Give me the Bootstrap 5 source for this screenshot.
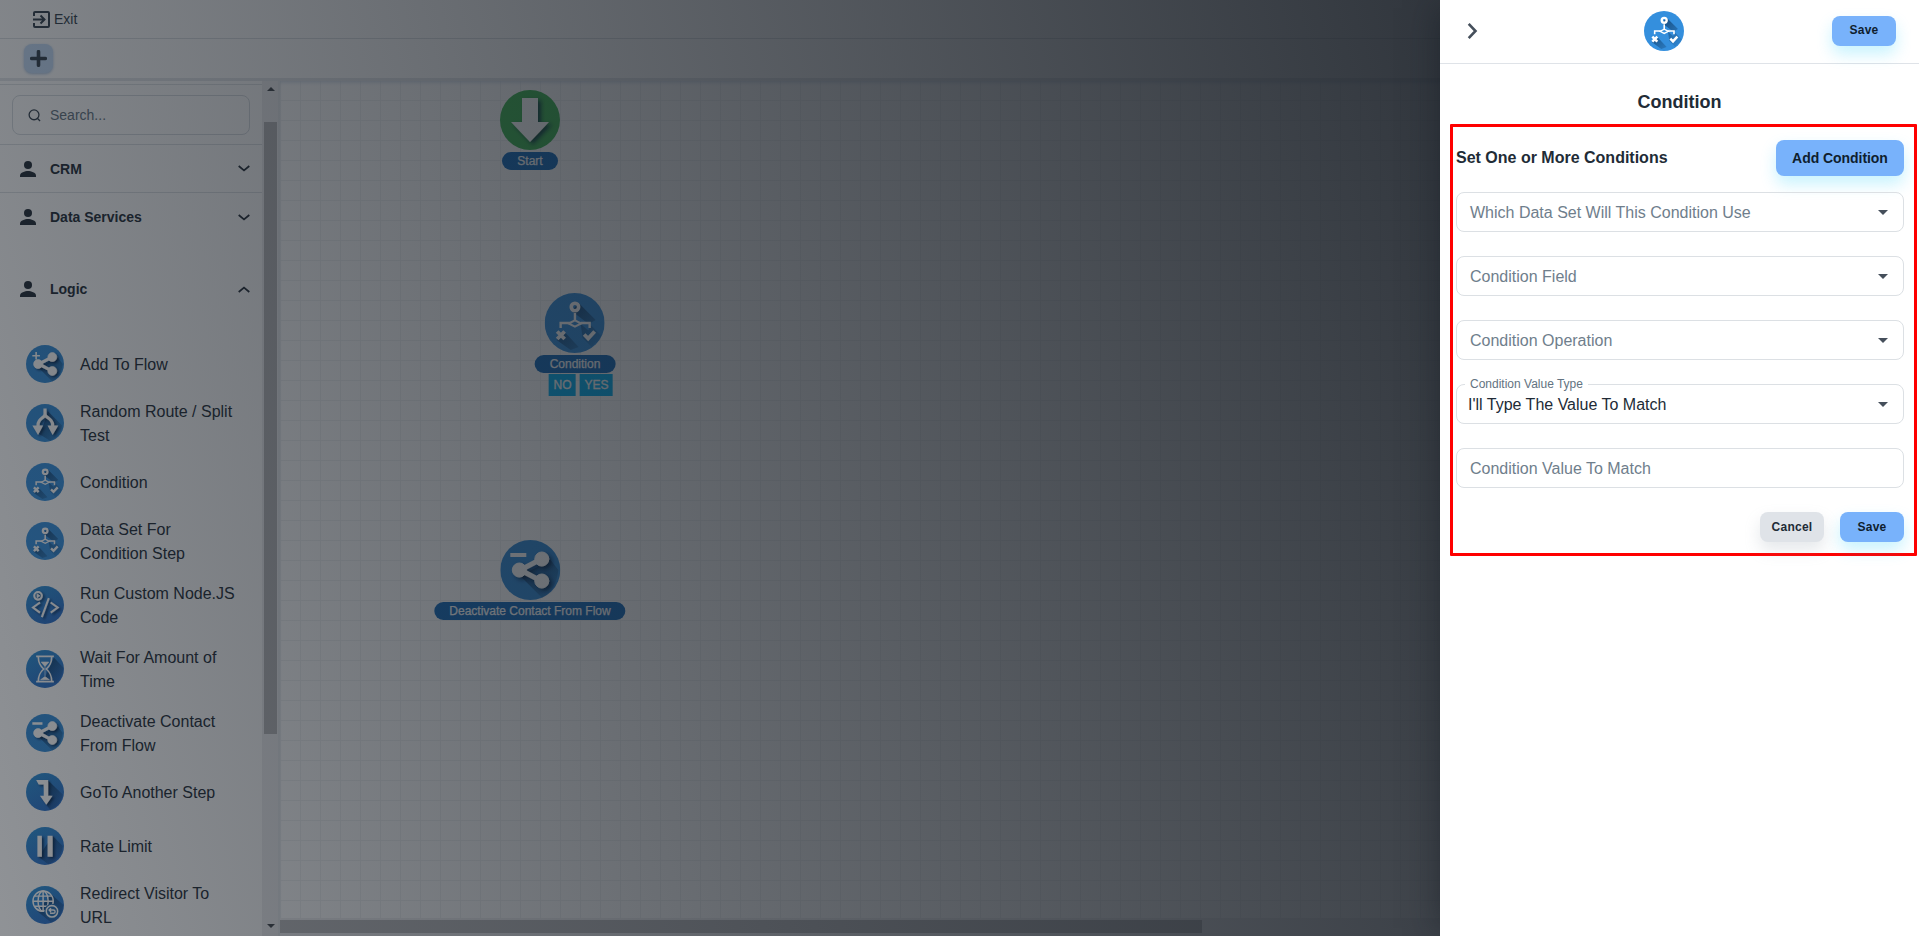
<!DOCTYPE html>
<html lang="en">
<head>
<meta charset="utf-8">
<title>Flow builder</title>
<link rel="stylesheet" href="https://cdn.jsdelivr.net/npm/bootstrap@5.3.0/dist/css/bootstrap.min.css">
<style>
body{font-family:"Liberation Sans",Arial,sans-serif;color:#212b36;font-size:16px;background:#fff;line-height:24px}
.app{height:100vh;position:relative}
.topbar{height:39px;border-bottom:1px solid #dce0e4;padding-left:32px;font-size:14px;color:#323f4c}
.topbar span{margin-left:-1px}
.toolbar{height:42px;border-bottom:3px solid #e4e7eb;padding-left:24px}
.addbtn{width:29px;height:29px;border-radius:8px;background:#c4dcf8;box-shadow:0 1px 3px #aac4e4}
.side{width:262px;padding-top:4px;margin-top:-1px}
.searchwrap{border-top:1px solid #dfe3e6;border-bottom:1px solid #dce0e4;height:61px;padding:10px 12px}
.searchbox{height:40px;border:1px solid #d6dbe0;border-radius:8px;font-size:14px;color:#637381;padding-left:15px;gap:9px}
.group{height:48px;padding:0 12px 0 16px;font-size:14px;font-weight:700}
.group .label{margin-left:10px}
.ruled{border-bottom:1px solid #dce0e4}
.item{min-height:54px;padding:8px 0 8px 26px;gap:16px}
.item svg{width:38px;height:38px;flex:none}
.item span{width:165px;position:relative;top:.5px}
.vbar{width:18px;background:#efeff1;border-right:2px solid #e6e9ec;padding:6px 1px 4px 2px}
.vthumb{height:612px;background:#b7b7b9;margin-top:31px}
.board{position:relative;background-color:#fff;background-image:linear-gradient(to right,#f1f3f4 1px,transparent 1px),linear-gradient(#f1f3f4 1px,transparent 1px);background-size:20px 20px;background-position:0 -1px;box-shadow:inset 0 3px 4px -2px #ccd7e6}
.node{position:absolute;transform:translateX(-50%)}
.node svg{width:60px;height:60px}
.pill{background:#156bbb;color:#fff;border-radius:9px;height:18px;line-height:18px;font-size:12px;padding:0 15px;margin-top:2px;-webkit-text-stroke:.25px #fff;white-space:nowrap}
.port{background:#02b0f2;color:#fff;font-size:12px;line-height:22px;height:22px;padding:0 4.500px;margin-top:1px;-webkit-text-stroke:.3px #fff}
.hbar{position:absolute;left:0;right:0;bottom:0;height:18px;background:#efeff1;padding-top:2px}
.hthumb{width:922px;height:13px;background:#bcbcbe}
.shade{position:absolute;inset:0;background:linear-gradient(75deg,rgba(22,28,36,.48) 0%,rgb(22,28,36) 100%)}
.panel{position:absolute;top:0;right:0;bottom:0;width:479px;background:#fff;box-shadow:-10px 0 30px -8px rgba(22,28,36,.5)}
.panelhead{height:64px;border-bottom:1px solid #dfe3e8;padding:0 23px 2px 20px;display:grid;grid-template-columns:1fr auto 1fr}
.act{background:#78b2fb;border:0;border-radius:8px;color:#0f1e2e;font-weight:700;font-size:12px;width:64px;height:30px;letter-spacing:.25px;padding:0 0 1px;box-shadow:0 8px 16px rgba(0,200,250,.22)}
.act.wide{width:128px;height:36px;font-size:14px;letter-spacing:-.05px;padding:0}
.act.muted{background:#dfe3e8;color:#212b36;box-shadow:0 8px 16px rgba(145,158,171,.24)}
.ttl{font-size:18px;font-weight:700;margin:26px 0 10px;text-align:center;line-height:24px}
.framed{border:3px solid #f00;margin:0 2px 0 10px;height:432px;padding:13px 10px 0 3px;border-radius:1px}
.field{height:40px;border:1px solid #dce0e4;border-radius:8px;padding:1px 14px 0 13px;margin-bottom:24px;color:#6f7e8c;position:relative}
.field .val{color:#212b36;margin-left:-2px}
.field .cap{position:absolute;top:-9px;left:8px;padding:0 5px;font-size:12px;line-height:16px;background:#fff;color:#637381}
</style>
</head>
<body class="overflow-hidden">
<svg width="0" height="0" class="position-absolute">
<defs>
<filter id="sh" x="-30%" y="-30%" width="180%" height="180%"><feDropShadow dx="3" dy="2.5" stdDeviation="2" flood-color="#001c3c" flood-opacity=".75"/></filter>
<linearGradient id="long" x1="0" y1="0" x2="1" y2="1"><stop offset="0" stop-color="#06284c" stop-opacity=".8"/><stop offset="1" stop-color="#06284c" stop-opacity="0"/></linearGradient>
<linearGradient id="bl" x1="0" y1="0" x2="0.6" y2="1"><stop offset="0" stop-color="#2b91d6"/><stop offset="1" stop-color="#2b6fc8"/></linearGradient>
<symbol id="cond" viewBox="0 0 60 60"><circle cx="30" cy="30" r="30" fill="#348fdd"/>
<path d="M34 10L51 27L44 31L27 18Z M36 31L54 46L47 54L38 45Z M20 39L34 54L26 57L12 47Z M46 32L57 43L52 50L42 42Z" fill="url(#long)"/>
<g fill="none" stroke="#fff"><circle cx="30.300" cy="14" r="3.700" stroke-width="3.600"/><path d="M30.300 20v7M16 35v-5h9M36 30h9v5" stroke-width="2.400"/><path d="M24 30.500l6.300-3.200l6.300 3.200l-6.300 3.200z" stroke-width="2"/><path d="M12.500 38.500l7.500 7.500M20 38.500l-7.500 7.500" stroke-width="3.800"/><path d="M39.500 41.500l4 4L50 38.500" stroke-width="3.800"/></g></symbol>
<symbol id="share" viewBox="0 0 60 60"><circle cx="30" cy="30" r="30" fill="#318bd7"/><path d="M48 17L58 30Q56 50 42 58L20 36L37 27Z" fill="url(#long)"/><g fill="#fff" stroke="#fff" filter="url(#sh)"><circle cx="19" cy="30" r="7"/><circle cx="41.500" cy="19" r="7"/><circle cx="41.500" cy="41" r="7"/><path d="M41 19L20 30L41 41" fill="none" stroke-width="5"/></g></symbol>
<symbol id="addflow" viewBox="0 0 60 60"><use href="#share" width="60" height="60"/><path d="M16 11v12M10 17h12" stroke="#fff" stroke-width="2.500"/></symbol>
<symbol id="deact" viewBox="0 0 60 60"><use href="#share" width="60" height="60"/><path d="M10 15h16" stroke="#fff" stroke-width="4"/></symbol>
<symbol id="start" viewBox="0 0 60 60"><circle cx="30" cy="30" r="30" fill="#3db552"/><path filter="url(#sh)" d="M22 8h16v24h11L30 52L11 32h11z" fill="#fff"/></symbol>
<symbol id="split" viewBox="0 0 60 60"><circle cx="30" cy="30" r="30" fill="#318bd7"/><path d="M35 12L57 34Q56 51 38 58L22 48Z" fill="url(#long)"/><g filter="url(#sh)"><path d="M30 7v9c0 6-11 6-11 17v4M30 16c0 6 12 6 12 17v4" fill="none" stroke="#fff" stroke-width="5"/><path d="M10 34h17l-8 15zM34 34h17l-9 15z" fill="#fff"/></g></symbol>
<symbol id="code" viewBox="0 0 60 60"><circle cx="30" cy="30" r="30" fill="url(#bl)"/><g filter="url(#sh)" fill="none" stroke="#fff" stroke-width="3.200"><circle cx="19" cy="15.500" r="6"/><path d="M22 26L11 34L22 42M39 26L50 34L39 42M36 19L25 49"/><path d="M17.500 12.500l4.500 3l-4.500 3z" fill="#fff" stroke-width="1"/></g></symbol>
<symbol id="wait" viewBox="0 0 60 60"><circle cx="30" cy="30" r="30" fill="url(#bl)"/><path d="M44 12L59 28Q57 45 48 52L28 48Z" fill="url(#long)"/><g fill="none" stroke="#fff" stroke-width="2.600"><path d="M16 10h28M16 50h28"/><path d="M19.500 11c0 10 3 14 8.500 19c-5.500 5-8.500 9-8.500 19M40.500 11c0 10-3 14-8.500 19c5.500 5 8.500 9 8.500 19"/><path d="M24 19h12l-6 7zM23 47l7-5l7 5zM30 26v15" fill="#fff" stroke-width="1"/></g></symbol>
<symbol id="goto" viewBox="0 0 60 60"><circle cx="30" cy="30" r="30" fill="url(#bl)"/><path d="M35 12L58 34Q56 51 38 58L31 48Z" fill="url(#long)"/><path filter="url(#sh)" d="M16 11h19v25h7L32 50L22 36h6V18H20z" fill="#fff"/></symbol>
<symbol id="rate" viewBox="0 0 60 60"><circle cx="30" cy="30" r="30" fill="url(#bl)"/><path d="M42 14L58 30Q56 52 35 59L20 47Z" fill="url(#long)"/><path filter="url(#sh)" d="M18 14h7v33h-7zM34 14h8v33h-8z" fill="#fff"/></symbol>
<symbol id="redir" viewBox="0 0 60 60"><circle cx="30" cy="30" r="30" fill="url(#bl)"/><path d="M40 13L59 30Q57 52 40 58L18 40Z" fill="url(#long)"/><g fill="none" stroke="#fff" stroke-width="2.300"><circle cx="27" cy="24" r="16"/><ellipse cx="27" cy="24" rx="8" ry="16"/><path d="M27 8v32M11 24h32M14 16h26M14 32h26"/></g><circle cx="41" cy="40" r="12" fill="#246cae"/><circle cx="41" cy="40" r="9" fill="none" stroke="#fff" stroke-width="2.400"/><path d="M37 38h6q3 0 3 2.500t-3 2.500h-5M39.500 35l-3 3l3 3" fill="none" stroke="#fff" stroke-width="2.200"/></symbol>
<symbol id="user" viewBox="0 0 24 24"><circle cx="12" cy="8" r="4"/><path d="M4 20v-1.500c0-3 5-4.500 8-4.500s8 1.500 8 4.500V20z"/></symbol>
<symbol id="chev" viewBox="0 0 12 7"><path d="M.7 1L6 5.400L11.300 1" fill="none" stroke="#212b36" stroke-width="1.700"/></symbol>
</defs></svg>

<div class="app d-flex flex-column">
  <header class="topbar d-flex align-items-center gap-1 flex-shrink-0">
    <svg width="19" height="19" viewBox="0 0 19 19" fill="none" stroke="#323f4c" stroke-width="2"><path d="M2 6V3q0-1 1-1h13q1 0 1 1v13q0 1-1 1H3q-1 0-1-1v-3M1 9.500h11M8.500 5.500l4 4l-4 4"/></svg>
    <span>Exit</span>
  </header>
  <div class="toolbar d-flex align-items-center flex-shrink-0">
    <div class="addbtn d-flex align-items-center justify-content-center"><svg width="17" height="17" viewBox="0 0 17 17"><path d="M8.500 1.700v13.600M1.700 8.500h13.600" stroke="#323f4c" stroke-width="3.600" stroke-linecap="round"/></svg></div>
  </div>
  <div class="d-flex flex-grow-1 overflow-hidden">
    <aside class="side flex-shrink-0 overflow-hidden">
      <div class="searchwrap"><div class="searchbox d-flex align-items-center">
        <svg width="13" height="13" viewBox="0 0 14 14" fill="none" stroke="#323f4c" stroke-width="1.400"><circle cx="6.500" cy="6.300" r="5.300"/><path d="M10 10l3 3"/></svg><span>Search...</span></div></div>
      <div class="group ruled d-flex align-items-center"><svg width="24" height="24" fill="#212b36"><use href="#user"/></svg><span class="label">CRM</span><svg class="ms-auto" width="12" height="7"><use href="#chev"/></svg></div>
      <div class="group d-flex align-items-center"><svg width="24" height="24" fill="#212b36"><use href="#user"/></svg><span class="label">Data Services</span><svg class="ms-auto" width="12" height="7"><use href="#chev"/></svg></div>
      <div class="group d-flex align-items-center mt-4"><svg width="24" height="24" fill="#212b36"><use href="#user"/></svg><span class="label">Logic</span><svg class="ms-auto" width="12" height="7" style="transform:rotate(180deg)"><use href="#chev"/></svg></div>
      <div class="pt-4">
        <div class="item d-flex align-items-center"><svg><use href="#addflow"/></svg><span>Add To Flow</span></div>
        <div class="item d-flex align-items-center"><svg><use href="#split"/></svg><span>Random Route / Split Test</span></div>
        <div class="item d-flex align-items-center"><svg><use href="#cond"/></svg><span>Condition</span></div>
        <div class="item d-flex align-items-center"><svg><use href="#cond"/></svg><span>Data Set For<br>Condition Step</span></div>
        <div class="item d-flex align-items-center"><svg><use href="#code"/></svg><span>Run Custom Node.JS Code</span></div>
        <div class="item d-flex align-items-center"><svg><use href="#wait"/></svg><span>Wait For Amount of Time</span></div>
        <div class="item d-flex align-items-center"><svg><use href="#deact"/></svg><span>Deactivate Contact From Flow</span></div>
        <div class="item d-flex align-items-center"><svg><use href="#goto"/></svg><span>GoTo Another Step</span></div>
        <div class="item d-flex align-items-center"><svg><use href="#rate"/></svg><span>Rate Limit</span></div>
        <div class="item d-flex align-items-center"><svg><use href="#redir"/></svg><span>Redirect Visitor To URL</span></div>
      </div>
    </aside>
    <div class="vbar flex-shrink-0 d-flex flex-column">
      <svg class="mx-auto flex-shrink-0" width="8" height="4"><path d="M0 4h8L4 0z" fill="#42474d"/></svg>
      <div class="vthumb"></div>
      <svg class="mx-auto mt-auto mb-1 flex-shrink-0" width="8" height="4"><path d="M0 0h8L4 4z" fill="#42474d"/></svg>
    </div>
    <main class="board flex-grow-1">
      <div class="node d-flex flex-column align-items-center" style="left:250px;top:9px"><svg><use href="#start"/></svg><div class="pill">Start</div></div>
      <div class="node d-flex flex-column align-items-center" style="left:295px;top:212px"><svg><use href="#cond"/></svg><div class="pill">Condition</div><div class="d-flex gap-1 ms-2 ps-1"><div class="port">NO</div><div class="port">YES</div></div></div>
      <div class="node d-flex flex-column align-items-center" style="left:250px;top:459px"><svg><use href="#deact"/></svg><div class="pill">Deactivate Contact From Flow</div></div>
      <div class="hbar"><div class="hthumb"></div></div>
    </main>
  </div>
  <div class="shade"></div>
  <section class="panel">
    <div class="panelhead align-items-center">
      <svg width="24" height="24" viewBox="0 0 24 24" fill="none" stroke="#454f5b" stroke-width="2.600"><path d="M8.700 4.800L15.500 12L8.700 19.200"/></svg>
      <svg width="40" height="40" style="margin-left:-29px"><use href="#cond"/></svg>
      <button class="act ms-auto">Save</button>
    </div>
    <h1 class="ttl">Condition</h1>
    <div class="framed">
      <div class="d-flex justify-content-between align-items-center mb-3"><b class="text-nowrap">Set One or More Conditions</b><button class="act wide">Add Condition</button></div>
      <div class="field d-flex align-items-center justify-content-between"><span>Which Data Set Will This Condition Use</span><svg width="12" height="5"><path d="M1 0h10L6 5z" fill="#454f5b"/></svg></div>
      <div class="field d-flex align-items-center justify-content-between"><span>Condition Field</span><svg width="12" height="5"><path d="M1 0h10L6 5z" fill="#454f5b"/></svg></div>
      <div class="field d-flex align-items-center justify-content-between"><span>Condition Operation</span><svg width="12" height="5"><path d="M1 0h10L6 5z" fill="#454f5b"/></svg></div>
      <div class="field d-flex align-items-center justify-content-between"><span class="cap">Condition Value Type</span><span class="val">I'll Type The Value To Match</span><svg width="12" height="5"><path d="M1 0h10L6 5z" fill="#454f5b"/></svg></div>
      <div class="field d-flex align-items-center"><span>Condition Value To Match</span></div>
      <div class="d-flex justify-content-end gap-3"><button class="act muted">Cancel</button><button class="act">Save</button></div>
    </div>
  </section>
</div>
<script src="https://cdn.jsdelivr.net/npm/bootstrap@5.3.0/dist/js/bootstrap.bundle.min.js"></script>
</body>
</html>
